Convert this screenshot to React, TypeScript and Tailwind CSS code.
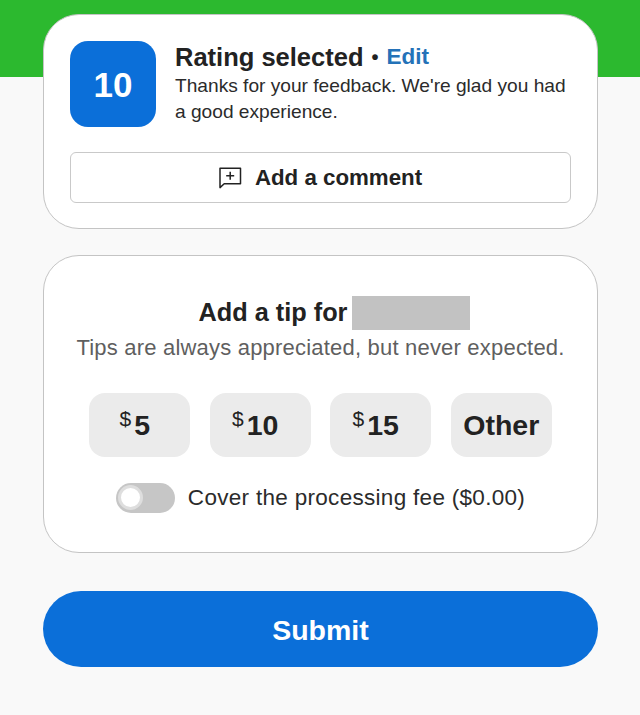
const tips = ["5", "10", "15"];

function CommentIcon() {
  return (
    <svg width="23" height="22" viewBox="0 0 23 22" fill="none" stroke="#222" strokeWidth="1.5">
      <path d="M1 1.2h20.5v15.6H5.2L1 20.6z" strokeLinejoin="round" />
      <path d="M11.2 4.8v8M7.2 8.8h8" />
    </svg>
  );
}

export default function App() {
  return (
    <div className="h-[715px] overflow-hidden bg-[#f9f9f9] font-['Liberation_Sans',Arial,sans-serif] text-[#222]">
      <div className="h-[77px] bg-[#2cb92f]" />

      <div className="-mt-[63px] flex flex-col pr-[42px] pl-[43px]">
        <section className="h-[215px] rounded-[36px] border border-[#c4c4c4] bg-white px-[26px] pt-[26px]">
          <div className="flex gap-[19px]">
            <div className="flex h-[86px] w-[86px] items-center justify-center rounded-[18px] bg-[#0b6fd9] pt-[2px] text-[35px] font-bold text-white">
              10
            </div>
            <div>
              <h2 className="flex items-center text-[25.5px] leading-[32px] font-bold whitespace-nowrap">
                Rating selected
                <span className="mx-[8px] text-[20px] leading-none">•</span>
                <span className="text-[22.5px] text-[#2472b8]">Edit</span>
              </h2>
              <p className="text-[19.15px] leading-[26px] whitespace-nowrap text-[#2b2b2b]">
                Thanks for your feedback. We're glad you had
                <br />a good experience.
              </p>
            </div>
          </div>
          <button className="mt-[25px] flex h-[51px] w-[501px] items-center justify-center gap-[13px] rounded-[6px] border-[1.5px] border-[#c9c9c9] bg-white pt-[1px] text-[22.3px] font-bold">
            <CommentIcon />
            Add a comment
          </button>
        </section>

        <section className="mt-[26px] flex h-[298px] flex-col items-center rounded-[36px] border border-[#c4c4c4] bg-white pt-[40px]">
          <div className="ml-[28px] flex h-[34px] items-center text-[25.3px] font-bold">
            Add a tip for
            <span className="ml-[5px] h-[34px] w-[118px] bg-[#c2c2c2]" />
          </div>
          <p className="mt-[3px] text-[22px] leading-[30px] tracking-[0.2px] text-[#5f5f5f]">
            Tips are always appreciated, but never expected.
          </p>
          <div className="mt-[30px] flex gap-[19.5px]">
            {tips.map((tip) => (
              <button
                key={tip}
                className="flex h-[64px] w-[101px] items-center justify-center gap-[3px] rounded-[16px] bg-[#ebebeb] pr-[10px] text-[28.5px] font-bold"
              >
                <span className="-mt-[13px] text-[21px] font-normal">$</span>
                {tip}
              </button>
            ))}
            <button className="h-[64px] w-[101px] rounded-[16px] bg-[#ebebeb] text-[28.5px] font-bold">
              Other
            </button>
          </div>
          <div className="mt-[24px] flex items-center gap-[13px]">
            <div className="flex h-[30px] w-[59px] items-center rounded-full bg-[#c6c6c6] pl-[2px]">
              <div className="h-[25px] w-[25px] rounded-full border-[3px] border-[#dedede] bg-white" />
            </div>
            <span className="text-[22.5px] tracking-[0.3px] text-[#2b2b2b]">
              Cover the processing fee ($0.00)
            </span>
          </div>
        </section>

        <button className="mt-[38px] h-[76px] rounded-full bg-[#0b6fd9] pt-[3px] text-[28.5px] font-bold text-white">
          Submit
        </button>
      </div>
    </div>
  );
}
